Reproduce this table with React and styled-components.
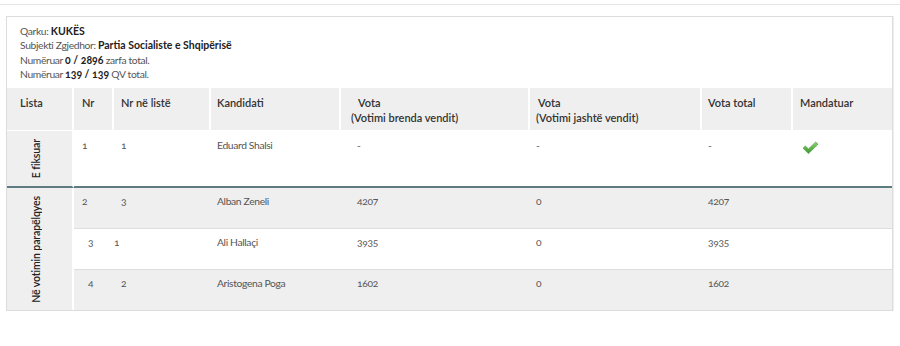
import React from "react";
import styled, { createGlobalStyle } from "styled-components";

const GlobalStyle = createGlobalStyle`
  html, body { margin: 0; padding: 0; background: #fff; }
  body {
    font-family: Lato, "Open Sans", sans-serif;
    color: #555;
    font-variant-numeric: oldstyle-nums;
  }
`;

const TopRule = styled.div`
  height: 1px;
  margin-top: 4px;
  background: #e6e6e6;
`;

const Panel = styled.section`
  margin: 11px 7px 0 6px;
  border: 1px solid #dcdcdc;
  box-shadow: 1px 0 0 #efefef;
`;

const Info = styled.div`
  padding: 7px 13px 7px;
  font-size: 10.3px;
  letter-spacing: -0.35px;
  line-height: 14.25px;
  color: #555;
  b { color: #222; font-weight: 700; font-size: 10.5px; letter-spacing: 0; }
`;

const Table = styled.table`
  width: 100%;
  table-layout: fixed;
  border-collapse: separate;
  border-spacing: 0;
  line-height: 15px;
`;

const Th = styled.th`
  box-sizing: border-box;
  height: 43px;
  vertical-align: top;
  text-align: left;
  font-size: 11px;
  font-weight: 600;
  color: #333;
  background: #efefef;
  padding: 7px 4px 0 ${(p) => p.$pad}px;
  border-right: ${(p) => (p.$last ? 0 : 2)}px solid #fff;
  border-bottom: 1px solid #fff;
`;

const Sub = styled.span`
  display: block;
  margin-left: ${(p) => p.$shift || 0}px;
`;

const Td = styled.td`
  box-sizing: border-box;
  height: ${(p) => p.$h}px;
  vertical-align: top;
  text-align: left;
  font-size: 10.3px;
  letter-spacing: -0.35px;
  color: #555;
  background: ${(p) => (p.$gray ? "#efefef" : "#fff")};
  padding: ${(p) => p.$top}px 4px 0 ${(p) => p.$pad}px;
  border-bottom: ${(p) => p.$border || "0"};
`;

const ListaCell = styled.td`
  box-sizing: border-box;
  background: #efefef;
  border-right: 2px solid #fff;
  border-bottom: ${(p) => p.$border || "0"};
  padding: 0 0 0 22px;
  vertical-align: middle;
`;

const Vertical = styled.div`
  writing-mode: vertical-rl;
  transform: rotate(180deg);
  font-weight: 600;
  color: #222;
  font-size: 10.5px;
  letter-spacing: -0.1px;
  line-height: 15px;
  white-space: nowrap;
`;

const cols = [
  { w: 67, pad: 13 },
  { w: 40, pad: 8 },
  { w: 97, pad: 7 },
  { w: 130, pad: 6 },
  { w: 189, pad: 10 },
  { w: 172, pad: 6 },
  { w: 91, pad: 6 },
  { w: 99, pad: 7 },
];

const headers = [
  ["Lista"],
  ["Nr"],
  ["Nr në listë"],
  ["Kandidati"],
  ["Vota", "(Votimi brenda vendit)", 7],
  ["Vota", "(Votimi jashtë vendit)", 2],
  ["Vota total"],
  ["Mandatuar"],
];

const Check = () => (
  <svg width="17" height="14" viewBox="0 0 17 14">
    <defs>
      <linearGradient id="chk" x1="0" y1="0" x2="0" y2="1">
        <stop offset="0" stopColor="#8bd66f" />
        <stop offset="1" stopColor="#3a982c" />
      </linearGradient>
    </defs>
    <path
      d="M1 7.2 L3.3 5 L6.5 7.9 L13.7 1 L16 3.2 L6.5 12.6 Z"
      fill="url(#chk)"
      stroke="#44913a"
      strokeWidth="0.6"
      strokeLinejoin="round"
    />
  </svg>
);

const group = [
  { nr: "2", nrl: "3", name: "Alban Zeneli", v1: "4207", v2: "0", vt: "4207", gray: true, s1: 0, s2: 0, h: 41, border: "1px solid #dedede" },
  { nr: "3", nrl: "1", name: "Ali Hallaçi", v1: "3935", v2: "0", vt: "3935", gray: false, s1: 6, s2: -7, h: 41, border: "1px solid #dedede" },
  { nr: "4", nrl: "2", name: "Aristogena Poga", v1: "1602", v2: "0", vt: "1602", gray: true, s1: 6, s2: 0, h: 40, border: "0" },
];

const dataPad = (i) => (i === 4 ? 16 : cols[i].pad);

export default function App() {
  const dark = "2px solid #5f7b82";
  return (
    <>
      <GlobalStyle />
      <TopRule />
      <Panel>
        <Info>
          <div>Qarku: <b>KUKËS</b></div>
          <div>Subjekti Zgjedhor: <b>Partia Socialiste e Shqipërisë</b></div>
          <div>Numëruar <b>0 / 2896</b> zarfa total.</div>
          <div>Numëruar <b>139 / 139</b> QV total.</div>
        </Info>
        <Table>
          <colgroup>
            {cols.map((c, i) => (
              <col key={i} style={{ width: c.w }} />
            ))}
          </colgroup>
          <thead>
            <tr>
              {headers.map((h, i) => (
                <Th key={i} $pad={cols[i].pad} $last={i === headers.length - 1}>
                  <Sub $shift={h[2]}>{h[0]}</Sub>
                  {h[1] && <Sub>{h[1]}</Sub>}
                </Th>
              ))}
            </tr>
          </thead>
          <tbody>
            <tr>
              <ListaCell $border={dark}>
                <Vertical>E fiksuar</Vertical>
              </ListaCell>
              {["1", "1", "Eduard Shalsi", "-", "-", "-"].map((v, i) => (
                <Td key={i} $h={57} $top={7} $pad={dataPad(i + 1)} $border={dark}>
                  {v}
                </Td>
              ))}
              <Td $h={57} $top={10} $pad={cols[7].pad + 2} $border={dark}>
                <Check />
              </Td>
            </tr>
            {group.map((r, ri) => (
              <tr key={ri}>
                {ri === 0 && (
                  <ListaCell rowSpan={3}>
                    <Vertical>Në votimin parapëlqyes</Vertical>
                  </ListaCell>
                )}
                {[r.nr, r.nrl, r.name, r.v1, r.v2, r.vt, ""].map((v, i) => {
                  const shift = i === 0 ? r.s1 : i === 1 ? r.s2 : 0;
                  return (
                    <Td
                      key={i}
                      $h={r.h}
                      $top={6}
                      $gray={r.gray}
                      $pad={dataPad(i + 1) + shift}
                      $border={r.border}
                    >
                      {v}
                    </Td>
                  );
                })}
              </tr>
            ))}
          </tbody>
        </Table>
      </Panel>
    </>
  );
}
